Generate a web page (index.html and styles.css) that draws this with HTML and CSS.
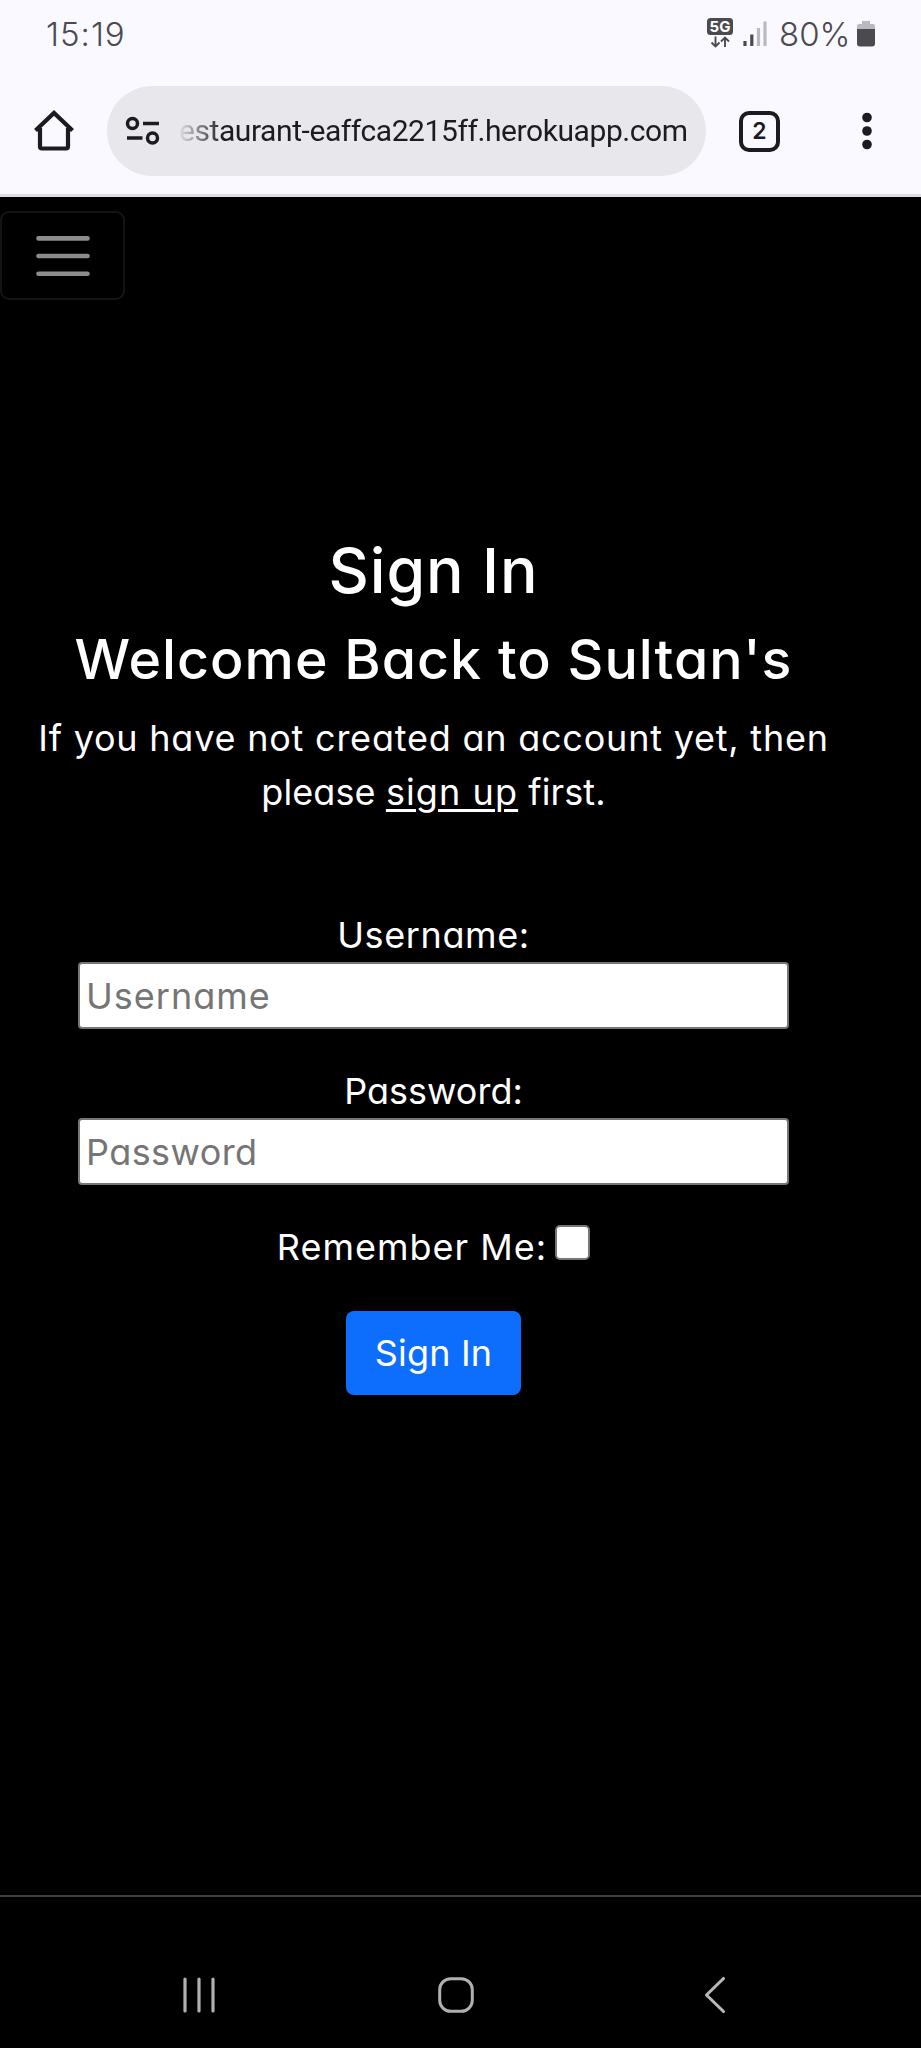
FILE: index.html
```html
<!DOCTYPE html>
<html lang="en">
<head>
<meta charset="utf-8">
<title>Sign In</title>
<link rel="stylesheet" href="styles.css">
</head>
<body>
<div class="status">
  <span class="clock">15:19</span>
  <div class="tray">
    <svg class="net" width="28" height="32" viewBox="0 0 28 32">
      <rect x="1" y="1" width="26" height="17" rx="3.500" fill="#4b4b4f"/>
      <text class="net-text" x="14" y="15.200" text-anchor="middle">5G</text>
      <path d="M9.500 19.500v9.500M5.500 25.500l4 4 4-4M19 30v-9.500M15 24.500l4-4 4 4" fill="none" stroke="#4b4b4f" stroke-width="1.900"/>
    </svg>
    <svg class="signal" width="24" height="26" viewBox="0 0 24 26">
      <path d="M2 20v5M8.800 13.500v11.500" stroke="#4b4b4f" stroke-width="3.200"/>
      <path d="M15.500 7v18M22 0.500v24.500" stroke="#b9b9be" stroke-width="3.200"/>
    </svg>
    <span class="percent">80%</span>
    <svg class="battery" width="18" height="27" viewBox="0 0 18 27">
      <path d="M5 1h8v3h3q2 0 2 2v3H0V6q0-2 2-2h3z" fill="#b9b9be"/>
      <path d="M0 9h18v14.500q0 3-3 3H3q-3 0-3-3z" fill="#4b4b4f"/>
    </svg>
  </div>
</div>
<div class="toolbar">
  <svg class="home" width="42" height="42" viewBox="0 0 42 42">
    <path d="M2.500 20.500 21 3l18.500 17.500M7 18v18.500q0 2 2 2h24q2 0 2-2V18" fill="none" stroke="#1b1b21" stroke-width="4.200" stroke-linejoin="miter"/>
  </svg>
  <div class="omnibox">
    <svg width="36" height="30" viewBox="0 0 36 30">
      <g fill="none" stroke="#1b1b21" stroke-width="3.500">
        <circle cx="7.500" cy="7.500" r="5"/><path d="M18 7.500h16"/>
        <circle cx="27.500" cy="22" r="5"/><path d="M2 22h15.500"/>
      </g>
    </svg>
    <span class="url">estaurant-eaffca2215ff.herokuapp.com</span>
  </div>
  <span class="tabs">2</span>
  <svg class="more" width="10" height="38" viewBox="0 0 10 38">
    <g fill="#1b1b21"><circle cx="5" cy="5.500" r="4.800"/><circle cx="5" cy="19" r="4.800"/><circle cx="5" cy="32.500" r="4.800"/></g>
  </svg>
</div>
<main class="page">
  <button class="toggler" aria-label="Menu">
    <svg width="54" height="42" viewBox="0 0 54 42">
      <path d="M2.500 3.400h49M2.500 21h49M2.500 38.800h49" stroke="#8c8c8c" stroke-width="4.600" stroke-linecap="round"/>
    </svg>
  </button>
  <section class="signin">
    <h1 class="title">Sign In</h1>
    <h2 class="welcome">Welcome Back to Sultan's</h2>
    <p class="intro"><span class="intro-a">If you have not created an account yet, then</span><br><span class="intro-b">please <a class="link">sign up</a> first.</span></p>
    <form class="form">
      <label class="label user">Username:</label>
      <input class="field field-user" placeholder="Username">
      <label class="label pass">Password:</label>
      <input class="field field-pass" placeholder="Password">
      <div class="remember"><label class="remember-text">Remember Me:</label><span class="check"></span></div>
      <button class="submit" type="button">Sign In</button>
    </form>
  </section>
</main>
<nav class="sysnav">
  <svg class="recents" width="34" height="36" viewBox="0 0 34 36">
    <path d="M3 2v32M17 2v32M31 2v32" stroke="#b0b0b0" stroke-width="3.200" stroke-linecap="round"/>
  </svg>
  <svg class="homekey" width="36" height="36" viewBox="0 0 36 36">
    <rect x="1.700" y="1.700" width="32.600" height="32.600" rx="11" fill="none" stroke="#b0b0b0" stroke-width="3"/>
  </svg>
  <svg class="back" width="22" height="38" viewBox="0 0 22 38">
    <path d="M19.500 2.500 2.500 19l17 16.500" fill="none" stroke="#b8b8b8" stroke-width="3.100" stroke-linecap="round" stroke-linejoin="round"/>
  </svg>
</nav>
</body>
</html>
```
FILE: styles.css
```css
* { box-sizing: border-box; }
body {
  margin: 0;
  width: 921px;
  height: 2048px;
  display: flex;
  flex-direction: column;
  background: #000;
  color: #fff;
  font-family: Inter, "Open Sans", sans-serif;
  overflow: hidden;
}
svg { display: block; flex: none; }

.status {
  height: 70px;
  padding: 0 46px 0 46px;
  display: flex;
  justify-content: space-between;
  background: #faf9ff;
  color: #4b4b4f;
  font-weight: 300;
  font-size: 33px;
  line-height: 69px;
}
.clock { letter-spacing: 1px; }
.tray { display: flex; align-items: flex-start; }
.net { margin-top: 17px; }
.net-text { font: 700 15px Inter, sans-serif; fill: #fff; }
.signal { margin: 21px 0 0 9px; }
.percent { margin-left: 12px; width: 72px; white-space: nowrap; }
.battery { margin: 20px 0 0 6px; }

.toolbar {
  height: 127px;
  padding: 16px 0 0 33px;
  display: flex;
  align-items: flex-start;
  background: #faf9ff;
  border-bottom: 3px solid #dddce2;
}
.home { margin-top: 24px; }
.omnibox {
  width: 599px;
  height: 90px;
  margin-left: 32px;
  padding: 0 15px 0 18px;
  border-radius: 45px;
  display: flex;
  align-items: center;
  background: #e8e7ec;
}
.url {
  margin-left: 18px;
  width: 512px;
  font-family: Roboto, sans-serif;
  font-size: 30px;
  letter-spacing: -0.42px;
  line-height: 92px;
  white-space: nowrap;
  color: transparent;
  background: linear-gradient(90deg, #e0dfe4 0, #1b1b21 44px);
  -webkit-background-clip: text;
  background-clip: text;
}
.tabs {
  width: 41px;
  height: 41px;
  margin: 25px 0 0 33px;
  border: 4px solid #1b1b21;
  border-radius: 10px;
  color: #1b1b21;
  font-size: 23px;
  font-weight: 600;
  line-height: 33px;
  text-align: center;
}
.more { margin: 26px 0 0 82px; }

.page { height: 1698px; padding-top: 14px; }
.toggler {
  display: flex;
  align-items: center;
  justify-content: center;
  width: 125px;
  height: 89px;
  padding: 0;
  border: 2px solid #141414;
  border-radius: 9px;
  background: #000;
}
.signin {
  width: 867px;
  margin-top: 232px;
  text-align: center;
  font-size: 36px;
  font-feature-settings: "cv11" 1;
}
.title {
  margin: 0 0 18px;
  font-size: 62.5px;
  font-weight: 550;
  line-height: 76px;
  letter-spacing: 0.9px;
}
.welcome {
  margin: 0 0 19px;
  font-size: 55.5px;
  font-weight: 550;
  line-height: 66px;
  letter-spacing: 1px;
  white-space: nowrap;
}
.intro { margin: 0 0 89px; line-height: 54px; white-space: nowrap; }
.intro-a { letter-spacing: 0.78px; }
.intro-b { letter-spacing: 0.1px; }
.link { letter-spacing: 1.1px; text-decoration: underline; text-decoration-thickness: 3px; text-underline-offset: 4px; }
.form { display: flex; flex-direction: column; align-items: center; }
.label { line-height: 54px; }
.user { letter-spacing: 0.6px; }
.pass { letter-spacing: 0; }
.field {
  width: 711px;
  height: 67px;
  margin-bottom: 35px;
  padding: 0 6px;
  border: 2px solid #767676;
  border-radius: 4px;
  background: #fff;
  font: inherit;
  font-feature-settings: inherit;
}
.field::placeholder { color: #757575; opacity: 1; }
.field-user { letter-spacing: 1px; }
.field-pass { letter-spacing: 0.4px; }
.remember { display: flex; line-height: 54px; margin-bottom: 37px; }
.remember-text { letter-spacing: 1px; }
.check {
  width: 35px;
  height: 35px;
  margin: 5px 0 0 8px;
  border: 2px solid #767676;
  border-radius: 5px;
  background: #fff;
}
.submit {
  width: 175px;
  height: 84px;
  padding: 0;
  border: 0;
  border-radius: 8px;
  background: #0d6efd;
  color: #fff;
  font: inherit;
  font-feature-settings: inherit;
  letter-spacing: 0.2px;
}

.sysnav {
  height: 153px;
  padding: 80px 0 0 182px;
  display: flex;
  align-items: flex-start;
  border-top: 2px solid #404040;
}
.homekey { margin-left: 222px; }
.back { margin: -1px 0 0 230px; }
```
